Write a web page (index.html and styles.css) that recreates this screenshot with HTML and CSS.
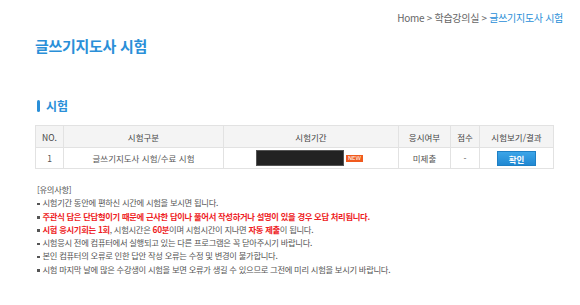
FILE: index.html
```html
<!DOCTYPE html>
<html lang="ko">
<head>
<meta charset="utf-8">
<link rel="stylesheet" href="styles.css">
</head>
<body>
<div class="page">
  <div class="crumb">Home &gt; 학습강의실 &gt; <span class="cur">글쓰기지도사 시험</span></div>
  <h1 class="title">글쓰기지도사 시험</h1>
  <h2 class="sec"><span class="bar"></span>시험</h2>
  <table class="tbl">
    <colgroup>
      <col class="c1"><col class="c2"><col class="c3"><col class="c4"><col class="c5"><col class="c6">
    </colgroup>
    <thead>
      <tr><th>NO.</th><th>시험구분</th><th>시험기간</th><th>응시여부</th><th>점수</th><th>시험보기/결과</th></tr>
    </thead>
    <tbody>
      <tr>
        <td>1</td>
        <td>글쓰기지도사 시험/수료 시험</td>
        <td class="period"><span class="blk"></span><span class="new">NEW</span></td>
        <td>미제출</td>
        <td>-</td>
        <td><span class="btn">확인</span></td>
      </tr>
    </tbody>
  </table>
  <div class="notes">
    <p class="nh">[유의사항]</p>
    <p class="li">시험기간 동안에 편하신 시간에 시험을 보시면 됩니다.</p>
    <p class="li red">주관식 답은 단답형이기 때문에 근사한 답이나 풀어서 작성하거나 설명이 있을 경우 오답 처리됩니다.</p>
    <p class="li"><b class="rd">시험 응시기회는 1회</b>, 시험시간은 <b class="rd">60분</b>이며 시험시간이 지나면 <b class="rd">자동 제출</b>이 됩니다.</p>
    <p class="li">시험응시 전에 컴퓨터에서 실행되고 있는 다른 프로그램은 꼭 닫아주시기 바랍니다.</p>
    <p class="li">본인 컴퓨터의 오류로 인한 답안 작성 오류는 수정 및 변경이 불가합니다.</p>
    <p class="li">시험 마지막 날에 많은 수강생이 시험을 보면 오류가 생길 수 있으므로 그전에 미리 시험을 보시기 바랍니다.</p>
  </div>
</div>
</body>
</html>
```
FILE: styles.css
```css
html, body { margin: 0; padding: 0; background: #fff; }
body { font-family: "Noto Sans CJK KR", "Noto Sans", sans-serif; color: #555; }
.page { padding: 11px 17px 0 35px; }
.crumb { text-align: right; font-size: 10px; color: #666; line-height: 14px; letter-spacing: -0.3px; }
.crumb .cur { color: #2a8fd8; }
.title { margin: 11px 0 0; font-size: 15px; line-height: 20px; font-weight: bold; color: #2a8fd8; letter-spacing: -0.3px; }
.sec { margin: 43px 0 0 2px; font-size: 12px; line-height: 14px; font-weight: bold; color: #2a8fd8; display: flex; align-items: center; gap: 6px; }
.sec .bar { width: 3px; height: 12px; background: #2a8fd8; border-radius: 2px; }
.tbl { margin-top: 12px; width: 518px; border-collapse: collapse; font-size: 8.5px; color: #555; table-layout: fixed; }
.tbl th, .tbl td { border: 1px solid #e2e2e2; text-align: center; padding: 0; }
.tbl th { background: #f4f4f4; height: 21px; font-weight: normal; color: #444; }
.tbl td { height: 20px; }
.c1 { width: 28px; } .c2 { width: 160px; } .c3 { width: 175px; } .c4 { width: 52px; } .c5 { width: 29px; } .c6 { width: 74px; }
.period { text-align: left !important; }
.blk { display: inline-block; vertical-align: middle; width: 88px; height: 16px; background: #222; margin-left: 32px; border: 1px solid #555; box-sizing: border-box; }
.new { display: inline-block; vertical-align: middle; margin-left: 2px; background: #f05a1e; color: #fff; font-size: 5.5px; line-height: 7px; padding: 0 2px; font-family: "DejaVu Sans", sans-serif; }
.btn { display: inline-block; width: 39px; height: 15px; line-height: 15px; background: linear-gradient(#3ca5e8, #2088d2); border: 1px solid #1e7fc4; box-sizing: border-box; color: #fff; font-weight: bold; font-size: 8.5px; vertical-align: middle; }
.notes { margin-top: 14px; font-size: 8.3px; color: #555; letter-spacing: -0.3px; }
.notes p { margin: 0; line-height: 13.3px; }
.nh { margin-left: 2px !important; }
.li::before { content: ""; display: inline-block; width: 2.5px; height: 2.5px; background: #555; vertical-align: middle; margin: 0 3px 0 2px; }
.red { color: #ee1c24; font-weight: bold; }
.rd { color: #ee1c24; }
```
